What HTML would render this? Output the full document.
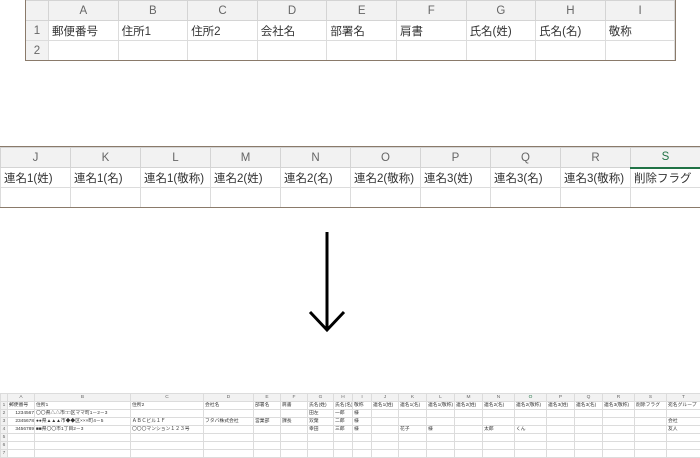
<!DOCTYPE html>
<html><head><meta charset="utf-8"><style>
*{margin:0;padding:0;box-sizing:border-box}
body{width:700px;height:456px;background:#fff;position:relative;overflow:hidden;font-family:"Liberation Sans","Noto Sans CJK JP",sans-serif;color:#222}
table{border-collapse:collapse;table-layout:fixed;position:absolute}
td{border:1px solid #dcdcdc;white-space:nowrap;overflow:hidden}
.big td{height:20px;font-size:11.5px;padding-left:3px;color:#333}
.big tr.h td{background:#f2f2f2;color:#666;text-align:center;padding:0;font-size:11.5px;border-color:#d4d4d4}
.big td.rn{background:#f2f2f2;color:#666;text-align:center;padding:0}
.frame{position:absolute;border:1.5px solid #8a7a6a}
.sm td{height:8px;font-size:4.8px;padding-left:1px;line-height:7px;color:#333}
.sm tr.h td{background:#f2f2f2;color:#666;text-align:center;padding:0}
.sm td.rn{background:#f2f2f2;color:#666;text-align:center;padding:0}
</style></head><body>

<table class="big" style="left:25px;top:0;width:650px">
<colgroup><col style="width:23px"><col span="9" style="width:69.6px"></colgroup>
<tr class="h"><td></td><td>A</td><td>B</td><td>C</td><td>D</td><td>E</td><td>F</td><td>G</td><td>H</td><td>I</td></tr>
<tr><td class="rn">1</td><td>郵便番号</td><td>住所1</td><td>住所2</td><td>会社名</td><td>部署名</td><td>肩書</td><td>氏名(姓)</td><td>氏名(名)</td><td>敬称</td></tr>
<tr><td class="rn">2</td><td></td><td></td><td></td><td></td><td></td><td></td><td></td><td></td><td></td></tr>
</table>
<div class="frame" style="left:25px;top:-2px;width:651px;height:63px"></div>

<table class="big" style="left:0;top:147px;width:700px">
<colgroup><col span="10" style="width:70px"></colgroup>
<tr class="h"><td>J</td><td>K</td><td>L</td><td>M</td><td>N</td><td>O</td><td>P</td><td>Q</td><td>R</td><td style="color:#217346;border-bottom:2px solid #217346">S</td></tr>
<tr><td>連名1(姓)</td><td>連名1(名)</td><td>連名1(敬称)</td><td>連名2(姓)</td><td>連名2(名)</td><td>連名2(敬称)</td><td>連名3(姓)</td><td>連名3(名)</td><td>連名3(敬称)</td><td>削除フラグ</td></tr>
<tr><td></td><td></td><td></td><td></td><td></td><td></td><td></td><td></td><td></td><td></td></tr>
</table>
<div class="frame" style="left:-2px;top:146px;width:704px;height:62px"></div>

<svg style="position:absolute;left:307px;top:232px" width="40" height="102">
<line x1="20" y1="0" x2="20" y2="98" stroke="#000" stroke-width="3"/>
<polyline points="3,80 20,98 37,80" fill="none" stroke="#000" stroke-width="3"/>
</svg>

<table class="sm" style="left:0;top:393px;width:700px">
<colgroup>
<col style="width:7px"><col style="width:27px"><col style="width:96px"><col style="width:73px"><col style="width:50px"><col style="width:27px"><col style="width:27px"><col style="width:26px"><col style="width:19px"><col style="width:19px"><col style="width:27px"><col style="width:28px"><col style="width:28px"><col style="width:28px"><col style="width:32px"><col style="width:32px"><col style="width:28px"><col style="width:28px"><col style="width:32px"><col style="width:32px"><col style="width:34px">
</colgroup>
<tr class="h"><td></td><td>A</td><td>B</td><td>C</td><td>D</td><td>E</td><td>F</td><td>G</td><td>H</td><td>I</td><td>J</td><td>K</td><td>L</td><td>M</td><td>N</td><td style="color:#217346">O</td><td>P</td><td>Q</td><td>R</td><td>S</td><td>T</td></tr>
<tr><td class="rn">1</td><td>郵便番号</td><td>住所1</td><td>住所2</td><td>会社名</td><td>部署名</td><td>肩書</td><td>氏名(姓)</td><td>氏名(名)</td><td>敬称</td><td>連名1(姓)</td><td>連名1(名)</td><td>連名1(敬称)</td><td>連名2(姓)</td><td>連名2(名)</td><td>連名2(敬称)</td><td>連名3(姓)</td><td>連名3(名)</td><td>連名3(敬称)</td><td>削除フラグ</td><td>宛名グループ</td></tr>
<tr><td class="rn">2</td><td style="text-align:right">1234567</td><td>〇〇県△△市□□区ママ町1－2－3</td><td></td><td></td><td></td><td></td><td>田左</td><td>一郎</td><td>様</td><td></td><td></td><td></td><td></td><td></td><td></td><td></td><td></td><td></td><td></td><td></td></tr>
<tr><td class="rn">3</td><td style="text-align:right">2345678</td><td>●●県▲▲▲市◆◆区×××町4－5</td><td>ＡＢＣビル１Ｆ</td><td>フタバ株式会社</td><td>営業部</td><td>課長</td><td>双葉</td><td>二郎</td><td>様</td><td></td><td></td><td></td><td></td><td></td><td></td><td></td><td></td><td></td><td></td><td>会社</td></tr>
<tr><td class="rn">4</td><td style="text-align:right">3456789</td><td>■■県〇〇市1丁目2－3</td><td>〇〇〇マンション１２３号</td><td></td><td></td><td></td><td>幸田</td><td>三郎</td><td>様</td><td></td><td>花子</td><td>様</td><td></td><td>太郎</td><td>くん</td><td></td><td></td><td></td><td></td><td>友人</td></tr>
<tr><td class="rn">5</td><td></td><td></td><td></td><td></td><td></td><td></td><td></td><td></td><td></td><td></td><td></td><td></td><td></td><td></td><td></td><td></td><td></td><td></td><td></td><td></td></tr>
<tr><td class="rn">6</td><td></td><td></td><td></td><td></td><td></td><td></td><td></td><td></td><td></td><td></td><td></td><td></td><td></td><td></td><td></td><td></td><td></td><td></td><td></td><td></td></tr>
<tr><td class="rn">7</td><td></td><td></td><td></td><td></td><td></td><td></td><td></td><td></td><td></td><td></td><td></td><td></td><td></td><td></td><td></td><td></td><td></td><td></td><td></td><td></td></tr>
</table>
</body></html>
